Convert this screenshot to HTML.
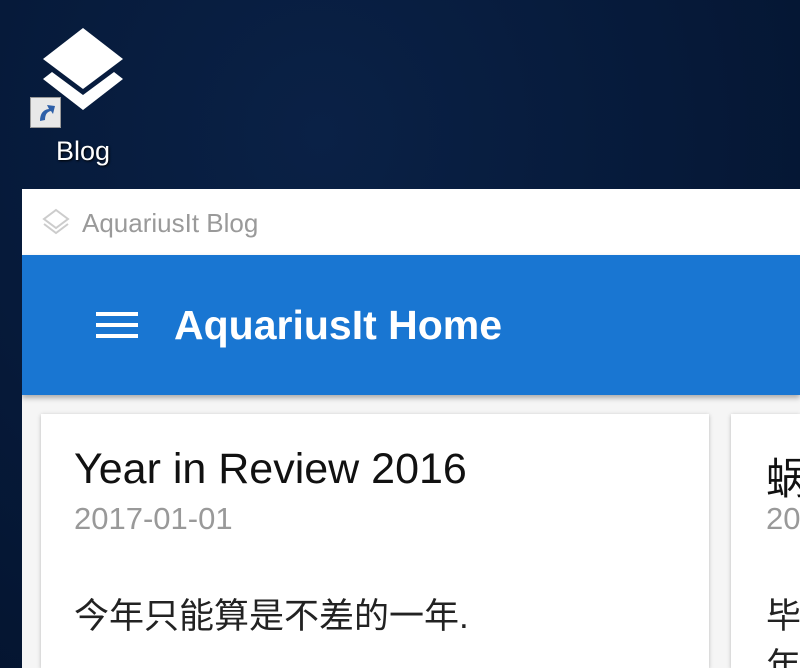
<!DOCTYPE html>
<html><head><meta charset="utf-8"><style>
html,body{margin:0;width:800px;height:668px;overflow:hidden}
body{background:radial-gradient(ellipse at 40% 20%,#0a2146 0%,#061a3a 50%,#04132d 100%);font-family:"Liberation Sans","Noto Sans CJK SC",sans-serif;position:relative}
.win{position:absolute;left:22px;top:189px;width:778px;height:479px;background:#f5f5f5;overflow:hidden}
.tb{height:66px;background:#fff;position:relative}
.tb span{position:absolute;left:60px;top:19px;font-size:26px;color:#9a9a9a}
.bar{height:140px;background:#1976d2;box-shadow:0 3px 5px rgba(0,0,0,.3);position:relative}
.bar .t{position:absolute;left:152px;top:47px;font-size:41px;font-weight:bold;color:#fff}
.ham{position:absolute;left:74px;width:42px;height:4px;background:#fff}
.card{position:absolute;background:#fff;box-shadow:0 1px 4px rgba(0,0,0,.25);top:225px;height:254px;overflow:hidden}
.h{position:absolute;font-size:43px;color:#111;top:31px;white-space:nowrap}
.d{position:absolute;font-size:31px;color:#999;top:87px;white-space:nowrap}
.p{position:absolute;font-size:35px;color:#222;top:178px;white-space:nowrap;line-height:50px}
</style></head><body>
<svg style="position:absolute;left:40px;top:28px" width="86" height="86" viewBox="0 0 86 86"><polygon points="43,0 83,31 43,61 3,31" fill="#fff"/><polygon points="3,51 12,44 43,67 74,44 83,51 43,82" fill="#fff"/></svg>
<div style="position:absolute;left:30px;top:97px;width:29px;height:29px;background:#e8e8e8;border:1px solid #999"><svg width="29" height="29"><path d="M9 23 Q9 12 18 11 L16 7 L24 8 L22 16 L20 13 Q14 14 14 22 Z" fill="#2d5fa8"/></svg></div>
<div style="position:absolute;left:56px;top:136px;color:#fff;font-size:27px;text-shadow:1px 1px 2px #000">Blog</div>
<div class="win">
<div class="tb"><svg style="position:absolute;left:20px;top:19px" width="28" height="28" viewBox="0 0 28 28"><polygon points="14,2 26,11 14,20 2,11" fill="none" stroke="#ccc" stroke-width="2"/><polyline points="2,16 14,25 26,16" fill="none" stroke="#ccc" stroke-width="2"/></svg><span>AquariusIt Blog</span></div>
<div class="bar"><div class="ham" style="top:57px"></div><div class="ham" style="top:68px"></div><div class="ham" style="top:79px"></div><div class="t">AquariusIt Home</div></div>
<div class="card" style="left:19px;width:668px"><div class="h" style="left:33px">Year in Review 2016</div><div class="d" style="left:33px">2017-01-01</div><div class="p" style="left:33px">今年只能算是不差的一年.</div></div>
<div class="card" style="left:709px;width:69px"><div class="h" style="left:35px">蜗牛</div><div class="d" style="left:35px">2016</div><div class="p" style="left:35px">毕业<br>年</div></div>
</div>
</body></html>
